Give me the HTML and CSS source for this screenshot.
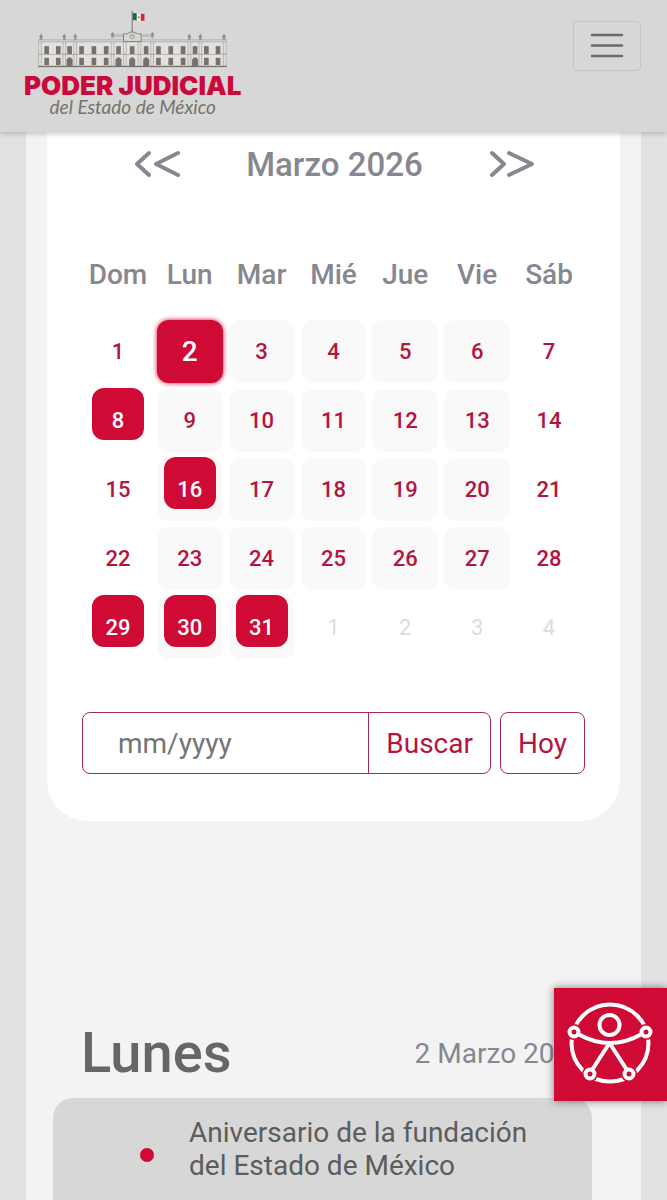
FILE: index.html
```html
<!DOCTYPE html>
<html lang="es">
<head>
    <meta charset="UTF-8">
    <meta name="viewport" content="width=device-width, initial-scale=1.0">
    <title>Calendario | Poder Judicial del Estado de México</title>
    <link rel="stylesheet" href="styles.css">
</head>
<body>
    <header class="navbar">
        <a class="logo" href="#">
            <svg class="logo-building" viewBox="108 28 580 176" aria-hidden="true">
                <defs>
                    <g id="win"><rect x="-7" y="136" width="14" height="24"/><rect x="-7" y="171" width="14" height="22"/></g>
                    <g id="door"><rect x="-7" y="136" width="14" height="24"/><path d="M-9 196v-20q9-14 18 0v20z"/></g>
                    <g id="urn"><circle cy="107" r="5"/><path d="M-1 98h2v8h-2zM-4 112h8v5h-8z"/></g>
                    <g id="col"><path d="M-4 122v74M4 122v74"/><path d="M-5 160h10"/></g>
                </defs>
                <rect x="115" y="124" width="565" height="72" fill="#e2e1e0"/>
                <g fill="none" stroke="#a5a09b" stroke-width="2">
                    <path d="M114 117h568M114 123h568M116 161h563M340 102h116M340 106h30M425 106h30"/>
                    <use href="#col" x="120"/><use href="#col" x="193"/><use href="#col" x="226"/>
                    <use href="#col" x="338"/><use href="#col" x="375"/><use href="#col" x="419"/><use href="#col" x="457"/>
                    <use href="#col" x="569"/><use href="#col" x="602"/><use href="#col" x="675"/>
                </g>
                <path d="M371 122V99h11q15-12 31 0h11v23z" fill="#d7d7d7" stroke="#89837c" stroke-width="3"/>
                <circle cx="397" cy="107" r="7" fill="none" stroke="#89837c" stroke-width="2"/>
                <path d="M397 103v4h4" fill="none" stroke="#89837c" stroke-width="2"/>
                <g fill="#77716b">
                    <use href="#win" x="140"/><use href="#win" x="175"/><use href="#door" x="209"/><use href="#win" x="245"/>
                    <use href="#win" x="282"/><use href="#win" x="319"/><use href="#door" x="356"/><use href="#door" x="397"/>
                    <use href="#door" x="439"/><use href="#win" x="476"/><use href="#win" x="513"/><use href="#win" x="550"/>
                    <use href="#door" x="586"/><use href="#win" x="620"/><use href="#win" x="655"/>
                    <rect x="114" y="195" width="567" height="4"/>
                </g>
                <g fill="#918c86">
                    <use href="#urn" x="123"/><use href="#urn" x="193"/><use href="#urn" x="226"/>
                    <use href="#urn" x="338" y="-6"/><use href="#urn" x="458" y="-6"/>
                    <use href="#urn" x="569"/><use href="#urn" x="602"/><use href="#urn" x="673"/>
                </g>
                <path d="M397 30v64" stroke="#77716b" stroke-width="3"/>
                <path d="M399 37q6-2 12 1v21q-6-3-12-1z" fill="#14694d"/>
                <path d="M411 38q6 2 12 1v21q-6 1-12-1z" fill="#f1efec"/>
                <path d="M423 39q6-1 11 0v21q-5-1-11 0z" fill="#d12a35"/>
                <circle cx="417" cy="49" r="3" fill="#8d7a5a"/>
            </svg>
            <span class="logo-name">PODER JUDICIAL</span>
            <span class="logo-sub">del Estado de México</span>
        </a>
        <button class="menu-toggle" type="button" aria-label="Menú">
            <svg viewBox="0 0 34 34" aria-hidden="true"><path d="M2 6h30M2 16.500h30M2 27h30"/></svg>
        </button>
    </header>

    <main class="page">
        <section class="calendar">
            <div class="month-nav">
                <button type="button" aria-label="Mes anterior">
                    <svg viewBox="0 0 46 28" aria-hidden="true"><path d="M14 3L2 14l12 11M43 3L21 14l22 11"/></svg>
                </button>
                <h2>Marzo 2026</h2>
                <button type="button" aria-label="Mes siguiente">
                    <svg viewBox="0 0 46 28" aria-hidden="true"><path d="M4 3l12 11L4 25M21 3l23 11-23 11"/></svg>
                </button>
            </div>

            <table class="days">
                <thead>
                    <tr><th>Dom</th><th>Lun</th><th>Mar</th><th>Mié</th><th>Jue</th><th>Vie</th><th>Sáb</th></tr>
                </thead>
                <tbody>
                    <tr>
                        <td>1</td>
                        <td class="work selected">2</td>
                        <td class="work">3</td>
                        <td class="work">4</td>
                        <td class="work">5</td>
                        <td class="work">6</td>
                        <td>7</td>
                    </tr>
                    <tr>
                        <td><span class="marked">8</span></td>
                        <td class="work">9</td>
                        <td class="work">10</td>
                        <td class="work">11</td>
                        <td class="work">12</td>
                        <td class="work">13</td>
                        <td>14</td>
                    </tr>
                    <tr>
                        <td>15</td>
                        <td class="work"><span class="marked">16</span></td>
                        <td class="work">17</td>
                        <td class="work">18</td>
                        <td class="work">19</td>
                        <td class="work">20</td>
                        <td>21</td>
                    </tr>
                    <tr>
                        <td>22</td>
                        <td class="work">23</td>
                        <td class="work">24</td>
                        <td class="work">25</td>
                        <td class="work">26</td>
                        <td class="work">27</td>
                        <td>28</td>
                    </tr>
                    <tr>
                        <td><span class="marked">29</span></td>
                        <td class="work"><span class="marked">30</span></td>
                        <td class="work"><span class="marked">31</span></td>
                        <td class="other">1</td>
                        <td class="other">2</td>
                        <td class="other">3</td>
                        <td class="other">4</td>
                    </tr>
                </tbody>
            </table>

            <form class="search">
                <div class="search-group">
                    <input type="text" aria-label="Mes y año" placeholder="mm/yyyy">
                    <button type="submit">Buscar</button>
                </div>
                <button class="today" type="button">Hoy</button>
            </form>
        </section>

        <section class="agenda">
            <div class="agenda-header">
                <h1>Lunes</h1>
                <span class="agenda-date">2 Marzo 2026</span>
            </div>
            <div class="event">
                <span class="event-dot"></span>
                <p>Aniversario de la fundación del Estado de México</p>
            </div>
        </section>
    </main>

    <button class="accessibility" type="button" aria-label="Accesibilidad">
        <svg viewBox="0 0 113 113" aria-hidden="true">
            <circle class="line" cx="56" cy="55" r="38.500"/>
            <g class="gap">
                <circle cx="20" cy="44" r="8"/><circle cx="92" cy="44" r="8"/>
                <circle cx="36" cy="86" r="8"/><circle cx="75" cy="86" r="8"/>
            </g>
            <circle class="line" cx="55.500" cy="37" r="10"/>
            <path class="line" d="M24 46q32 18 64 0M38 82l17.500-27L73 82"/>
            <circle class="node" cx="20" cy="44" r="4.500"/>
            <circle class="node" cx="92" cy="44" r="4.500"/>
            <circle class="node" cx="36" cy="86" r="4.500"/>
            <circle class="node" cx="75" cy="86" r="4.500"/>
        </svg>
    </button>
</body>
</html>
```
FILE: styles.css
```css
* { box-sizing: border-box; }
body { margin: 0; min-height: 100vh; display: flex; flex-direction: column; background: #e2e2e2; font-family: Roboto, "Liberation Sans", sans-serif; font-size: 28px; color: #666; }
h1, h2, p { margin: 0; }
button, input { font: inherit; cursor: pointer; }

/* top bar */
.navbar { position: sticky; top: 0; z-index: 2; height: 132px; padding: 10px 26px 0 24px; display: flex; justify-content: space-between; align-items: flex-start; background: #d7d7d7; box-shadow: 0 2px 5px rgba(0, 0, 0, 0.2); }
.logo { display: flex; flex-direction: column; align-items: center; font-family: Lato, sans-serif; text-decoration: none; }
.logo-building { width: 193px; height: 59px; }
.logo-name { margin-top: 5px; font-family: Inter, sans-serif; font-size: 26px; line-height: 24px; font-weight: 900; color: #cb0a3c; }
.logo-sub { font-size: 19px; line-height: 18px; font-style: italic; color: #77716b; }
.menu-toggle { margin-top: 11px; padding: 7px 16px; border: 1px solid #c3c3c3; border-radius: 4px; background: none; }
.menu-toggle svg { display: block; width: 34px; height: 34px; fill: none; stroke: #6b6b6b; stroke-width: 2.5; stroke-linecap: round; }

.page { flex: 1; display: flex; flex-direction: column; margin: 0 26px; padding: 0 21px; background: #f3f3f3; }

/* calendar */
.calendar { padding: 0 32px 47px; background: #fff; border-radius: 0 0 40px 40px; }
.month-nav { display: flex; justify-content: space-between; align-items: center; height: 64px; margin-bottom: 32px; padding: 0 54px 0 56px; }
.month-nav h2 { font-size: 33px; font-weight: 500; color: #868791; }
.month-nav button { padding: 0; border: 0; background: none; }
.month-nav svg { display: block; width: 46px; height: 28px; fill: none; stroke: #868791; stroke-width: 4; stroke-linecap: round; stroke-linejoin: round; }
.days { width: 100%; table-layout: fixed; border-collapse: separate; border-spacing: 6px; }
.days th, .days td { padding: 0; text-align: center; font-weight: 500; }
.days th { height: 80px; color: #868791; }
.days td { height: 63px; border-radius: 12px; font-size: 22px; color: #b31540; }
.days .work { background: #f9f9f9; }
.days .other { color: #ddd; font-weight: 400; }
.days .selected { background: #cf0a34; color: #fff; font-size: 28px; box-shadow: 0 0 5px #cf0a34; }
.marked { display: block; width: 52px; height: 52px; margin: -2px auto 12px; padding-top: 14px; border-radius: 12px; background: #cf0a34; color: #fff; line-height: 38px; }

.search { display: flex; gap: 9px; margin: 47px 3px 0; }
.search-group { flex: 1; min-width: 0; display: flex; border: 1px solid #a82a4b; border-radius: 8px; }
.search input { flex: 1; min-width: 0; height: 60px; padding: 0 35px; border: 0; background: none; color: #666; }
.search input::placeholder { color: #757575; }
.search button { padding: 0 17px; border: 0; background: none; color: #b31540; }
.search-group button { border-left: 1px solid #a82a4b; }
.search .today { border: 1px solid #a82a4b; border-radius: 8px; }

/* events of the chosen day */
.agenda { flex: 1; display: flex; flex-direction: column; margin: 199px 28px 0 6px; }
.agenda-header { display: flex; justify-content: space-between; align-items: center; margin: 0 6px 12px 28px; }
.agenda-header h1 { font-size: 56px; line-height: 66px; font-weight: 500; }
.agenda-date { color: #868791; }
.event { flex: 1; display: flex; align-items: flex-start; gap: 35px; padding: 18px 50px 16px 87px; border-radius: 20px 20px 0 0; background: #d7d7d7; color: #5c5c5c; }
.event p { line-height: 33px; }
.event-dot { flex: none; width: 14px; height: 14px; margin-top: 32px; border-radius: 50%; background: #cf0a34; }

.accessibility { position: fixed; right: 0; bottom: 99px; z-index: 3; width: 113px; height: 113px; padding: 0; border: 0; background: #cf0a34; box-shadow: 0 0 8px rgba(0, 0, 0, 0.5); }
.accessibility svg { display: block; width: 113px; height: 113px; }
.accessibility .line { fill: none; stroke: #fff; stroke-width: 4; stroke-linejoin: round; }
.accessibility .gap { fill: #cf0a34; }
.accessibility .node { fill: #cf0a34; stroke: #fff; stroke-width: 4; }
```
